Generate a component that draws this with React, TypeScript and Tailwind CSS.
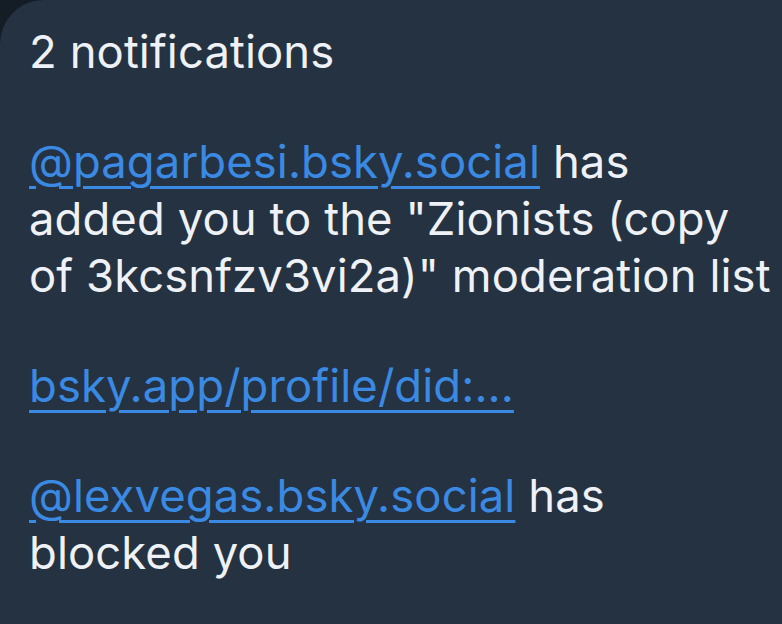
export default function App() {
  return (
    <div className="w-[782px] h-[624px] bg-[#141c26] overflow-hidden">
      <div className="w-full h-full bg-[#253242] rounded-tl-[44px] pl-[29px] pt-[23px] font-['Inter','Noto_Sans',sans-serif] text-[45.4px] tracking-[0.1px] leading-[57px] text-[#eef1f6] whitespace-nowrap">
        <p>2 notifications</p>
        <p className="h-[53px]" />
        <p>
          <a className="text-[#3a8ae4] underline decoration-[3px] underline-offset-[8px]">@pagarbesi.bsky.social</a> has
          <br />
          added you to the "Zionists (copy
          <br />
          of 3kcsnfzv3vi2a)" moderation list
        </p>
        <p className="h-[53px]" />
        <p>
          <a className="text-[#3a8ae4] underline decoration-[3px] underline-offset-[8px]">bsky.app/profile/did:...</a>
        </p>
        <p className="h-[53px]" />
        <p>
          <a className="text-[#3a8ae4] underline decoration-[3px] underline-offset-[8px]">@lexvegas.bsky.social</a> has
          <br />
          blocked you
        </p>
      </div>
    </div>
  );
}
